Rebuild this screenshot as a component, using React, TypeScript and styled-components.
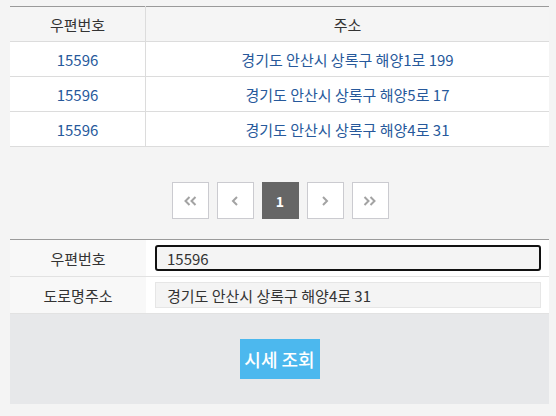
import React, { useState } from 'react';
import styled, { createGlobalStyle } from 'styled-components';

const GlobalStyle = createGlobalStyle`
  html, body {
    margin: 0;
    padding: 0;
    background: #f4f4f4;
  }
  body {
    font-family: 'Noto Sans CJK KR', 'Noto Sans', sans-serif;
    font-size: 15px;
    color: #333;
  }
`;

const rows = [
  { zip: '15596', address: '경기도 안산시 상록구 해양1로 199' },
  { zip: '15596', address: '경기도 안산시 상록구 해양5로 17' },
  { zip: '15596', address: '경기도 안산시 상록구 해양4로 31' },
];

export default function App() {
  const [zip, setZip] = useState('15596');
  const selected = rows[2];

  return (
    <>
      <GlobalStyle />
      <Page>
        <Table>
          <thead>
            <tr>
              <Th style={{ width: 135 }}>우편번호</Th>
              <Th>주소</Th>
            </tr>
          </thead>
          <tbody>
            {rows.map((row, i) => (
              <tr key={i}>
                <Td>{row.zip}</Td>
                <Td>{row.address}</Td>
              </tr>
            ))}
          </tbody>
        </Table>

        <Pager>
          <PageButton aria-label="처음">
            <Chevron double left />
          </PageButton>
          <PageButton aria-label="이전">
            <Chevron left />
          </PageButton>
          <PageButton active>1</PageButton>
          <PageButton aria-label="다음">
            <Chevron />
          </PageButton>
          <PageButton aria-label="마지막">
            <Chevron double />
          </PageButton>
        </Pager>

        <Form>
          <FormRow>
            <Label>우편번호</Label>
            <Field>
              <Input value={zip} onChange={(e) => setZip(e.target.value)} />
            </Field>
          </FormRow>
          <FormRow>
            <Label>도로명주소</Label>
            <Field>
              <ReadOnly>{selected.address}</ReadOnly>
            </Field>
          </FormRow>
          <Actions>
            <Submit>시세 조회</Submit>
          </Actions>
        </Form>
      </Page>
    </>
  );
}

const Chevron = ({ left, double }: { left?: boolean; double?: boolean }) => (
  <svg width="14" height="12" viewBox="0 0 14 12" fill="none">
    <g
      stroke="#a3a3a3"
      strokeWidth="2"
      transform={left ? 'translate(14 0) scale(-1 1)' : undefined}
    >
      {double ? (
        <>
          <path d="M1.5 2 L5.5 6 L1.5 10" />
          <path d="M7.5 2 L11.5 6 L7.5 10" />
        </>
      ) : (
        <path d="M5 2 L9 6 L5 10" />
      )}
    </g>
  </svg>
);

const Page = styled.div`
  padding: 6px 7px 13px 10px;
`;

const Table = styled.table`
  width: 100%;
  border-collapse: collapse;
  border-top: 1px solid #9a9a9a;
  background: #fff;
`;

const Th = styled.th`
  height: 34px;
  padding: 0;
  font-weight: 400;
  color: #333;
  background: #f5f5f5;
  border-bottom: 1px solid #dcdcdc;
  border-right: 1px solid #dcdcdc;
  &:last-child {
    border-right: none;
  }
`;

const Td = styled.td`
  height: 34px;
  padding: 0;
  text-align: center;
  color: #27599b;
  border-bottom: 1px solid #dcdcdc;
  border-right: 1px solid #dcdcdc;
  &:last-child {
    border-right: none;
  }
`;

const Pager = styled.div`
  display: flex;
  justify-content: center;
  gap: 8px;
  padding: 35px 0 20px;
  margin-left: 1px;
`;

const PageButton = styled.button<{ active?: boolean }>`
  width: 37px;
  height: 37px;
  display: flex;
  align-items: center;
  justify-content: center;
  padding: 0;
  border: 1px solid ${({ active }) => (active ? '#666' : '#cbcbd0')};
  background: ${({ active }) => (active ? '#666' : '#fff')};
  color: #fff;
  font-family: inherit;
  font-size: 14px;
  font-weight: 700;
`;

const Form = styled.div`
  border-top: 1px solid #9a9a9a;
`;

const FormRow = styled.div`
  display: flex;
  height: 36px;
  border-bottom: 1px solid #e2e2e2;
  background: #fff;
`;

const Label = styled.div`
  width: 136px;
  flex-shrink: 0;
  display: flex;
  align-items: center;
  justify-content: center;
  background: #f8f8f8;
  color: #333;
`;

const Field = styled.div`
  flex: 1;
  display: flex;
  align-items: center;
  padding: 0 8px 0 9px;
`;

const Input = styled.input`
  width: 100%;
  height: 26px;
  box-sizing: border-box;
  border: 2px solid #111;
  border-radius: 3px;
  background: #f4f4f4;
  padding: 0 10px;
  font-family: inherit;
  font-size: 15px;
  color: #333;
  outline: none;
`;

const ReadOnly = styled.div`
  width: 100%;
  height: 26px;
  box-sizing: border-box;
  border: 1px solid #e6e6e6;
  background: #f4f4f4;
  padding: 0 11px;
  display: flex;
  align-items: center;
  color: #333;
`;

const Actions = styled.div`
  height: 90px;
  display: flex;
  align-items: center;
  justify-content: center;
  background: #e7e8ea;
`;

const Submit = styled.button`
  width: 80px;
  height: 40px;
  border: none;
  padding: 0;
  background: #4cb8ee;
  color: #fff;
  font-family: inherit;
  font-size: 18px;
  font-weight: 500;
`;
